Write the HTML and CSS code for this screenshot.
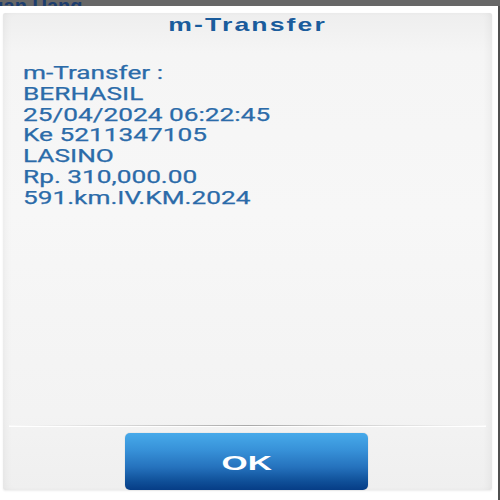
FILE: index.html
```html
<!DOCTYPE html>
<html>
<head>
<meta charset="utf-8">
<link rel="stylesheet" href="styles.css">
</head>
<body>
<div class="topbar"><span class="topbar-text">ian Uang</span></div>
<div class="page">
  <div class="dialog">
    <div class="dialog-title"><span class="title-text">m-Transfer</span></div>
    <div class="dialog-body">
      <div class="msg">
        <div class="line">m-Transfer :</div>
        <div class="line">BERHASIL</div>
        <div class="line">25/04/2024 06:22:45</div>
        <div class="line">Ke 5211347105</div>
        <div class="line">LASINO</div>
        <div class="line">Rp. 310,000.00</div>
        <div class="line">591.km.IV.KM.2024</div>
      </div>
    </div>
    <div class="separator"></div>
    <div class="dialog-footer">
      <button class="ok-btn"><span class="ok-text">OK</span></button>
    </div>
  </div>
  <div class="edge-line"></div>
</div>
</body>
</html>
```

FILE: styles.css
```css
html, body {
  margin: 0;
  padding: 0;
}
body {
  width: 500px;
  height: 500px;
  background: #ffffff;
  overflow: hidden;
  font-family: Roboto, "Liberation Sans", sans-serif;
}
.topbar {
  height: 6px;
  background: #676767;
  overflow: hidden;
  display: flex;
  align-items: flex-end;
}
.topbar-text {
  display: block;
  font-family: "Liberation Sans", Arial, sans-serif;
  font-weight: bold;
  font-size: 20px;
  line-height: 20px;
  color: #1c3d6e;
  margin-left: -2px;
  margin-bottom: -10px;
  flex: none;
}
.page {
  display: flex;
  height: 494px;
  padding: 7px 0 0 3px;
  box-sizing: border-box;
}
.dialog {
  width: 489px;
  height: 477px;
  display: flex;
  flex-direction: column;
  background: linear-gradient(180deg, #eeeeee 0px, #f5f5f5 40px, #f7f7f7 200px, #f3f3f3 400px, #efefef 477px);
  box-shadow: inset 6px 0 8px -4px rgba(0,0,0,0.05), inset -6px 0 8px -4px rgba(0,0,0,0.06), 0 1px 2px rgba(0,0,0,0.08);
  border-radius: 2px;
}
.edge-line {
  width: 1.5px;
  margin-left: auto;
  margin-right: 0.5px;
  margin-top: -7px;
  background: #4f4f4f;
  height: 494px;
}
.dialog-title {
  padding-top: 1px;
  height: 22px;
  text-align: center;
}
.title-text {
  display: inline-block;
  font-family: "Liberation Sans", Arial, sans-serif;
  font-weight: bold;
  font-size: 19px;
  line-height: 22px;
  letter-spacing: 1.5px;
  color: #1a5c9c;
  transform: scaleX(1.4);
  transform-origin: center;
}
.dialog-body {
  flex: 1;
  padding: 27px 0 0 20px;
}
.msg {
  transform: scaleX(1.38);
  transform-origin: left top;
}
.line {
  font-family: Roboto, "Liberation Sans", sans-serif;
  font-size: 19px;
  line-height: 20.8px;
  color: #2b6ba9;
  white-space: nowrap;
  -webkit-text-stroke: 0.25px #2b6ba9;
}
.separator {
  height: 2px;
  margin: 0 6px;
  background: linear-gradient(90deg, #f8f8f8 0%, #d6d6d6 25%, #a9a9a9 50%, #d6d6d6 75%, #f8f8f8 100%);
  background-size: 100% 1px;
  background-repeat: no-repeat;
  border-bottom: 1px solid #ffffff;
  box-sizing: border-box;
}
.dialog-footer {
  height: 57px;
  margin-top: 6px;
  display: flex;
  justify-content: center;
}
.ok-btn {
  width: 243px;
  height: 57px;
  margin-right: 2px;
  border: none;
  border-radius: 5px;
  padding: 0;
  background: linear-gradient(180deg, #47aaea 0%, #3791d8 30%, #2572bd 60%, #0f4f98 85%, #063d86 100%);
  display: flex;
  align-items: center;
  justify-content: center;
  box-shadow: 0 0 1px rgba(0,0,0,0.3);
}
.ok-text {
  display: inline-block;
  font-family: "Liberation Sans", Arial, sans-serif;
  font-weight: bold;
  font-size: 21px;
  line-height: 24px;
  color: #ffffff;
  transform: scaleX(1.6);
  margin-top: 2px;
}
```
